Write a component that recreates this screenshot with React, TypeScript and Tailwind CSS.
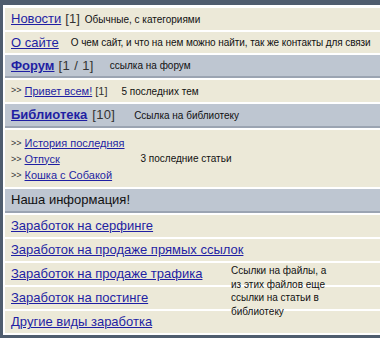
const link = "text-[#1f1fa3] underline";
const note = "text-[10px] text-[#111]";

const Row = ({ children, className = "" }: { children: React.ReactNode; className?: string }) => (
  <div className={`bg-[#ece9d8] flex items-center pl-[6px] ${className}`}>{children}</div>
);

const HeadRow = ({ children, className = "h-[23px]" }: { children: React.ReactNode; className?: string }) => (
  <div className={`bg-[#bec6d1] border-b-[2px] border-[#9ba4b2] flex items-center pl-[6px] ${className}`}>{children}</div>
);

export default function App() {
  return (
    <div className="w-[380px] h-[338px] bg-white border-t-[5px] border-l-[3px] border-b-[3px] border-[#4f5d6e] pt-[3px] pl-[2px] overflow-hidden font-['Liberation_Sans',Arial,sans-serif]">
      <div className="flex flex-col gap-[2px] relative">
        {/* Новости */}
        <Row className="h-[22px]">
          <a className={`${link} text-[13px]`}>Новости</a>
          <span className="text-[13px] text-[#333] ml-[4px]">[1]</span>
          <span className={`${note} ml-[5px]`}>Обычные, с категориями</span>
        </Row>

        {/* О сайте */}
        <Row className="h-[21px]">
          <a className={`${link} text-[13px]`}>О сайте</a>
          <span className={`${note} ml-[12px] tracking-[-0.08px] whitespace-nowrap`}>
            О чем сайт, и что на нем можно найти, так же контакты для связи
          </span>
        </Row>

        {/* Форум */}
        <HeadRow>
          <a className={`${link} text-[13px] font-bold`}>Форум</a>
          <span className="text-[13px] text-[#333] ml-[4px] tracking-[0.4px]">[1 / 1]</span>
          <span className={`${note} ml-[16px]`}>ссылка на форум</span>
        </HeadRow>

        <Row className="h-[22px] text-[11px]">
          <span className="text-[9px] text-[#333] mr-[3px]">&gt;&gt;</span>
          <a className={link}>Привет всем!</a>
          <span className="text-[#333] ml-[3px]">[1]</span>
          <span className={`${note} ml-[14px]`}>5 последних тем</span>
        </Row>

        {/* Библиотека */}
        <HeadRow className="h-[24px]">
          <a className={`${link} text-[13px] font-bold`}>Библиотека</a>
          <span className="text-[13px] text-[#333] ml-[5px] tracking-[0.3px]">[10]</span>
          <span className={`${note} ml-[19px]`}>Ссылка на библиотеку</span>
        </HeadRow>

        <Row className="h-[57px]">
          <div className="flex flex-col gap-[2px] text-[11px] leading-[14px]">
            {["История последняя", "Отпуск", "Кошка с Собакой"].map((t) => (
              <div key={t} className="flex items-center">
                <span className="text-[9px] text-[#333] mr-[3px]">&gt;&gt;</span>
                <a className={link}>{t}</a>
              </div>
            ))}
          </div>
          <span className={`${note} ml-[16px]`}>3 последние статьи</span>
        </Row>

        {/* Наша информация */}
        <HeadRow className="h-[24px]">
          <span className="text-[13px] text-[#111]">Наша информация!</span>
        </HeadRow>

        {[
          "Заработок на серфинге",
          "Заработок на продаже прямых ссылок",
          "Заработок на продаже трафика",
          "Заработок на постинге",
          "Другие виды заработка",
        ].map((t) => (
          <Row key={t} className="h-[22px]">
            <a className={`${link} text-[13px]`}>{t}</a>
          </Row>
        ))}

        {/* note over the link rows */}
        <div className={`absolute left-[226px] top-[256px] ${note} leading-[13.5px]`}>
          Ссылки на файлы, а<br />
          из этих файлов еще<br />
          ссылки на статьи в<br />
          библиотеку
        </div>
      </div>
    </div>
  );
}
